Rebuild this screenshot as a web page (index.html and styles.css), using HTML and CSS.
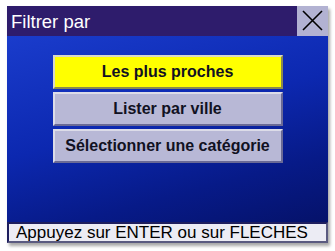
FILE: index.html
```html
<!DOCTYPE html>
<html>
<head>
<meta charset="utf-8">
<link rel="stylesheet" href="styles.css">
</head>
<body>
<div class="panel">
  <div class="titlebar">
    <span class="title">Filtrer par</span>
    <div class="close">
      <svg width="31" height="30" viewBox="0 0 31 30"><path d="M6 5 L25 24 M25 5 L6 24" stroke="#000" stroke-width="1.6" fill="none"/></svg>
    </div>
  </div>
  <div class="content">
    <div class="btn selected">Les plus proches</div>
    <div class="btn">Lister par ville</div>
    <div class="btn">Sélectionner une catégorie</div>
  </div>
  <div class="status">Appuyez sur ENTER ou sur FLECHES</div>
</div>
</body>
</html>
```
FILE: styles.css
```css
html, body {
  margin: 0;
  padding: 0;
  background: #ffffff;
  width: 335px;
  height: 251px;
  overflow: hidden;
  font-family: "Liberation Sans", Arial, sans-serif;
}
.panel {
  margin: 6px 0 0 7px;
  width: 321px;
  height: 237px;
  display: flex;
  flex-direction: column;
  box-shadow: 2px 3px 3px rgba(0,0,0,0.35);
}
.titlebar {
  height: 30px;
  background: #2e1c6c;
  display: flex;
  align-items: center;
  justify-content: space-between;
}
.title {
  color: #ffffff;
  font-size: 18.5px;
  padding-left: 4px;
  padding-top: 1px;
}
.close {
  width: 31px;
  height: 30px;
  background: #b2b2d2;
  display: flex;
}
.content {
  flex: 1;
  background: linear-gradient(165deg, #1a3ccc 0%, #0c28b0 45%, #071a88 75%, #05126a 100%);
  display: flex;
  flex-direction: column;
  align-items: center;
  gap: 3px;
  padding-top: 19px;
}
.btn {
  box-sizing: border-box;
  width: 230px;
  height: 34px;
  background: #b8b8d6;
  border: 2px solid;
  border-color: #dcdce8 #6a6a96 #6a6a96 #dcdce8;
  display: flex;
  align-items: center;
  justify-content: center;
  font-weight: bold;
  font-size: 16px;
  color: #111122;
}
.btn.selected {
  background: #ffff00;
  border-color: #d8d8c8 #8a8a50 #8a8a50 #d8d8c8;
}
.status {
  box-sizing: border-box;
  height: 21px;
  background: #ececf4;
  border: 2px solid #1e1e5e;
  border-bottom-color: #5a5a80;
  border-right-color: #5a5a80;
  font-size: 17px;
  line-height: 17px;
  padding-left: 7px;
  color: #000000;
  white-space: nowrap;
}
```
